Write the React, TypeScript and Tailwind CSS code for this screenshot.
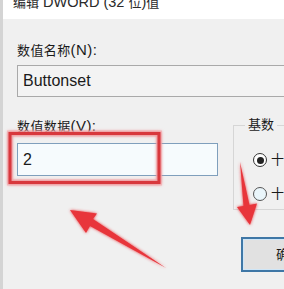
const font = { fontFamily: "'Liberation Sans', 'Noto Sans CJK SC', sans-serif" }

function Cjk({ children }: { children: React.ReactNode }) {
  return <span className="text-[13px]">{children}</span>
}

function Radio({ checked }: { checked?: boolean }) {
  return (
    <span
      className={`flex h-[14px] w-[14px] shrink-0 items-center justify-center rounded-full border ${
        checked ? "border-[#333] bg-white" : "border-[#555] bg-[#eaf6fb]"
      }`}
    >
      {checked && <span className="h-[7px] w-[7px] rounded-full bg-[#222]" />}
    </span>
  )
}

function Annotations() {
  return (
    <svg
      className="pointer-events-none absolute inset-0"
      width={284}
      height={289}
      viewBox="0 0 284 289"
    >
      <defs>
        <filter id="glow" x="-20%" y="-20%" width="140%" height="140%">
          <feGaussianBlur in="SourceGraphic" stdDeviation="1.6" result="b" />
          <feMerge>
            <feMergeNode in="b" />
            <feMergeNode in="SourceGraphic" />
          </feMerge>
        </filter>
      </defs>
      <g filter="url(#glow)">
        <rect x="7" y="133.5" width="149" height="49" fill="none" stroke="#f4a7aa" strokeWidth="6" opacity="0.6" />
        <rect x="7" y="133.5" width="149" height="49" fill="none" stroke="#d8383e" strokeWidth="3" />
        {/* left arrow */}
        <polygon
          points="67,210 94,213.5 90,219 163,268 87,226 83,233"
          fill="#e8353b"
        />
        {/* down arrow */}
        <polygon
          points="247,225 234,207 240.5,206 237,162 246.5,205 254,203.5"
          fill="#e8353b"
        />
      </g>
    </svg>
  )
}

export default function App() {
  return (
    <div
      className="relative h-[289px] w-[284px] overflow-hidden border-l-[3px] border-[#d4d4d4] bg-[#f0f0f0] text-[#1a1a1a]"
      style={font}
    >
      <div className="h-[19px] overflow-hidden bg-white pl-[10px]">
        <div className="-mt-[6px] whitespace-nowrap text-[14.5px] leading-4 text-[#2a2a2a]">
          <Cjk>编辑</Cjk> DWORD (32 <Cjk>位</Cjk>)<Cjk>值</Cjk>
        </div>
      </div>

      <div className="pl-[14px]">
        <div className="mt-[23px] h-4 whitespace-nowrap text-[15px] leading-4 tracking-[0.4px]">
          <Cjk>数值名称</Cjk>(N):
        </div>
        <div className="mt-[7px] flex h-[32px] w-[300px] items-center border border-[#a9a9a9] bg-[#f3f3f3] pl-[5px] text-[16px]">
          Buttonset
        </div>

        <div className="flex">
          <div className="w-[201px] shrink-0">
            <div className="mt-[21px] h-4 whitespace-nowrap text-[15px] leading-4 tracking-[0.4px]">
              <Cjk>数值数据</Cjk>(V):
            </div>
            <div className="mt-[9px] flex h-[33px] items-center border border-[#7f9fbc] bg-[#f6fbfd] pl-[5px] text-[16px]">
              2
            </div>
          </div>

          <div className="ml-[15px] shrink-0">
            <fieldset className="mt-[21px] h-[92px] w-[120px] border border-[#d6d6d6] pl-[19px] pr-0">
              <legend className="-ml-[8px] px-[3px] text-[13px] leading-[14px]">基数</legend>
              <label className="mt-[20px] flex items-center gap-[4px] whitespace-nowrap text-[13px] leading-[16px]">
                <Radio checked />
                十六进制(H)
              </label>
              <label className="mt-[18px] flex items-center gap-[4px] whitespace-nowrap text-[13px] leading-[16px]">
                <Radio />
                十进制(D)
              </label>
            </fieldset>
            <button className="ml-[8px] mt-[27px] flex h-[35px] w-[96px] items-center justify-center border-2 border-[#3f77a6] bg-[#e1e1e1] text-[13px] shadow-[inset_0_0_0_1px_#cfe6f7]">
              确定
            </button>
          </div>
        </div>
      </div>

      <Annotations />
    </div>
  )
}
